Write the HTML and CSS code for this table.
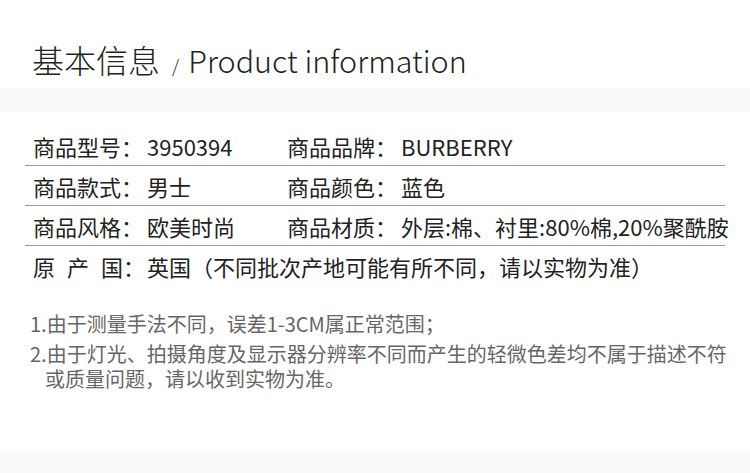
FILE: index.html
```html
<!DOCTYPE html>
<html lang="zh-CN">
<head>
  <meta charset="UTF-8" />
  <title>基本信息</title>
  <link rel="stylesheet" href="styles.css">
</head>
<body>

<div class="titulo">
  <span class="titulo-cn">基本信息</span>
  <span class="titulo-sep">/</span>
  <span class="titulo-en">Product information</span>
</div>
<div class="faixa"></div>

<div class="tabela">
  <div class="linha">
    <div class="celula"><span class="rotulo">商品型号：</span>3950394</div>
    <div class="celula"><span class="rotulo">商品品牌：</span>BURBERRY</div>
  </div>
  <div class="linha">
    <div class="celula"><span class="rotulo">商品款式：</span>男士</div>
    <div class="celula"><span class="rotulo">商品颜色：</span>蓝色</div>
  </div>
  <div class="linha">
    <div class="celula"><span class="rotulo">商品风格：</span>欧美时尚</div>
    <div class="celula"><span class="rotulo">商品材质：</span>外层:棉、衬里:80%棉,20%聚酰胺</div>
  </div>
  <div class="linha ultima">
    <div class="celula cheia"><span class="rotulo"><span class="espaco">原产</span>国：</span>英国（不同批次产地可能有所不同，请以实物为准）</div>
  </div>
</div>

<ul class="notas">
  <li>1.由于测量手法不同，误差1-3CM属正常范围；</li>
  <li>2.由于灯光、拍摄角度及显示器分辨率不同而产生的轻微色差均不属于描述不符或质量问题，请以收到实物为准。</li>
</ul>

<div class="faixa"></div>

</body>
</html>
```

FILE: styles.css
```css
body { margin: 0; background: #fff; color: #222; font-family: "Noto Sans CJK SC", "Noto Sans", sans-serif; }

.titulo { padding: 43px 0 13px 32px; height: 32px; line-height: 32px; font-size: 32px; font-weight: 300; white-space: nowrap; }
.titulo-sep { font-size: 18px; margin: 0 0 0 5px; }
.titulo-en { font-size: 30.5px; margin-left: 2px; }

.faixa { height: 24px; background: #fafafa; }

.tabela { margin: 14px 25px 0 25px; font-size: 22px; color: #222; }
.linha { display: flex; height: 39px; align-items: center; border-bottom: 1px solid #999; }
.linha.ultima { border-bottom: none; }
.celula { width: 254px; flex-shrink: 0; padding-left: 8px; box-sizing: border-box; white-space: nowrap; }
.celula + .celula { width: auto; flex: 1; }
.celula.cheia { width: 100%; }
.rotulo { display: inline-block; width: 114px; }
.espaco { letter-spacing: 12px; }

.notas { list-style: none; margin: 0; padding: 26px 20px 0 30px; height: 139px; font-size: 20px; line-height: 25px; color: #666; }
.notas li { padding-left: 15px; text-indent: -15px; margin-bottom: 5px; }
```
